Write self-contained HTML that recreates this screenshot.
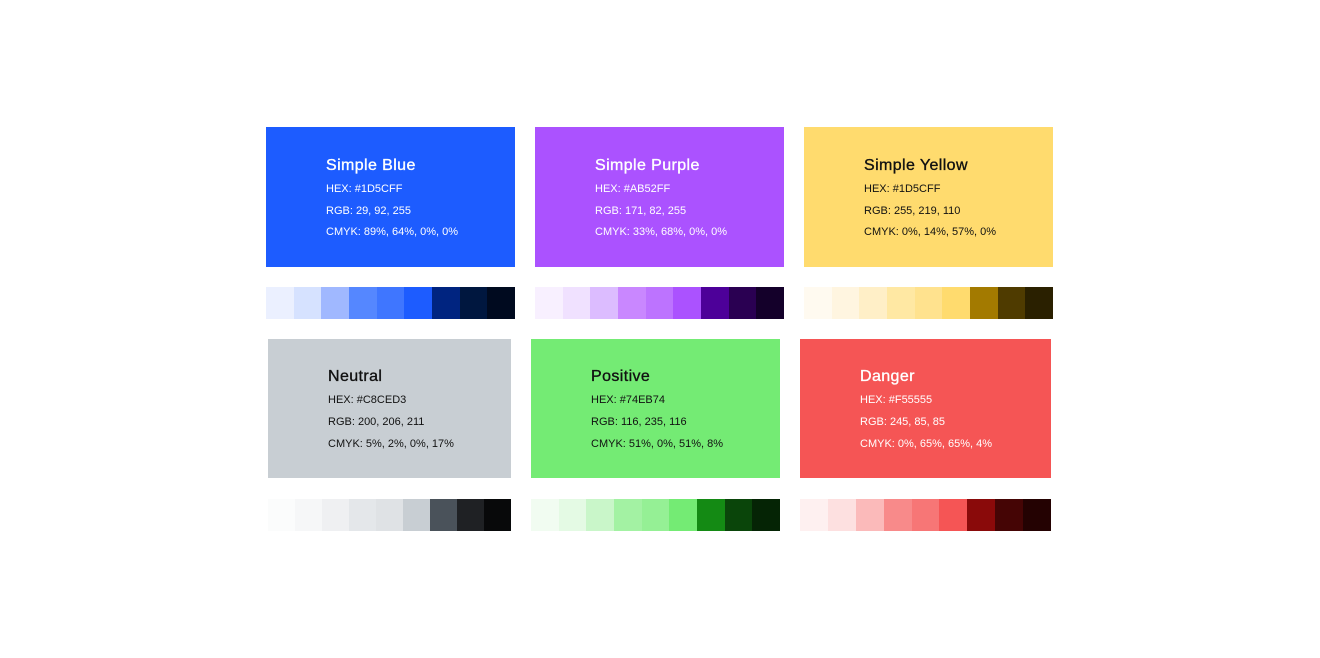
<!DOCTYPE html>
<html><head><style>
body{margin:0;width:1320px;height:658px;background:#fff;position:relative;font-family:"Liberation Sans",sans-serif;overflow:hidden}
.c{position:absolute;box-sizing:border-box}
.c h3{position:absolute;margin:0;font-size:16px;font-weight:normal;letter-spacing:.4px;line-height:20px;-webkit-text-stroke:.35px currentColor;margin-top:2px}
.c p{position:absolute;margin:0;font-size:11px;line-height:14px;margin-top:1px}
.s{position:absolute;display:flex;height:32px}
.s i{flex:1}
.w{color:#fff}.k{color:#111}
</style></head><body>
<div class="c w" style="left:266px;top:127px;width:249px;height:140px;background:#1d5cff">
<h3 style="left:60px;top:27px">Simple Blue</h3><p style="left:60px;top:54px">HEX: #1D5CFF</p><p style="left:60px;top:76px">RGB: 29, 92, 255</p><p style="left:60px;top:97px">CMYK: 89%, 64%, 0%, 0%</p></div>
<div class="c w" style="left:535px;top:127px;width:249px;height:140px;background:#ab52ff">
<h3 style="left:60px;top:27px">Simple Purple</h3><p style="left:60px;top:54px">HEX: #AB52FF</p><p style="left:60px;top:76px">RGB: 171, 82, 255</p><p style="left:60px;top:97px">CMYK: 33%, 68%, 0%, 0%</p></div>
<div class="c k" style="left:804px;top:127px;width:249px;height:140px;background:#ffdb6e">
<h3 style="left:60px;top:27px">Simple Yellow</h3><p style="left:60px;top:54px">HEX: #1D5CFF</p><p style="left:60px;top:76px">RGB: 255, 219, 110</p><p style="left:60px;top:97px">CMYK: 0%, 14%, 57%, 0%</p></div>
<div class="s" style="left:266px;top:287px;width:249px"><i style="background:#ebf0ff"></i><i style="background:#d6e2ff"></i><i style="background:#a0b8ff"></i><i style="background:#5587ff"></i><i style="background:#3f76ff"></i><i style="background:#1d5cff"></i><i style="background:#002480"></i><i style="background:#00173f"></i><i style="background:#000a1f"></i></div>
<div class="s" style="left:535px;top:287px;width:249px"><i style="background:#f8f0ff"></i><i style="background:#f0e1ff"></i><i style="background:#dcbcff"></i><i style="background:#c987ff"></i><i style="background:#bd73ff"></i><i style="background:#ab52ff"></i><i style="background:#4d0099"></i><i style="background:#2a0052"></i><i style="background:#14002a"></i></div>
<div class="s" style="left:804px;top:287px;width:249px"><i style="background:#fffaf0"></i><i style="background:#fff5e0"></i><i style="background:#ffefc7"></i><i style="background:#ffe8a3"></i><i style="background:#ffe28e"></i><i style="background:#ffdb6e"></i><i style="background:#a37a00"></i><i style="background:#4f3b00"></i><i style="background:#2a2000"></i></div>

<div class="c k" style="left:268px;top:339px;width:243px;height:139px;background:#c8ced3">
<h3 style="left:60px;top:26px">Neutral</h3><p style="left:60px;top:53px">HEX: #C8CED3</p><p style="left:60px;top:75px">RGB: 200, 206, 211</p><p style="left:60px;top:97px">CMYK: 5%, 2%, 0%, 17%</p></div>
<div class="c k" style="left:531px;top:339px;width:249px;height:139px;background:#74eb74">
<h3 style="left:60px;top:26px">Positive</h3><p style="left:60px;top:53px">HEX: #74EB74</p><p style="left:60px;top:75px">RGB: 116, 235, 116</p><p style="left:60px;top:97px">CMYK: 51%, 0%, 51%, 8%</p></div>
<div class="c w" style="left:800px;top:339px;width:251px;height:139px;background:#f55555">
<h3 style="left:60px;top:26px">Danger</h3><p style="left:60px;top:53px">HEX: #F55555</p><p style="left:60px;top:75px">RGB: 245, 85, 85</p><p style="left:60px;top:97px">CMYK: 0%, 65%, 65%, 4%</p></div>
<div class="s" style="left:268px;top:499px;width:243px"><i style="background:#fbfcfc"></i><i style="background:#f6f7f8"></i><i style="background:#eff0f2"></i><i style="background:#e4e7ea"></i><i style="background:#dfe2e5"></i><i style="background:#c8ced3"></i><i style="background:#4a525a"></i><i style="background:#1f2124"></i><i style="background:#08090a"></i></div>
<div class="s" style="left:531px;top:499px;width:249px"><i style="background:#f1fcf1"></i><i style="background:#e4fae4"></i><i style="background:#c9f6c9"></i><i style="background:#a3f2a3"></i><i style="background:#95f095"></i><i style="background:#74eb74"></i><i style="background:#148a14"></i><i style="background:#0a450a"></i><i style="background:#052405"></i></div>
<div class="s" style="left:800px;top:499px;width:251px"><i style="background:#fef0f0"></i><i style="background:#fde0e0"></i><i style="background:#fbbaba"></i><i style="background:#f88a8a"></i><i style="background:#f77676"></i><i style="background:#f55555"></i><i style="background:#8a0a0a"></i><i style="background:#450505"></i><i style="background:#240202"></i></div>
</body></html>
